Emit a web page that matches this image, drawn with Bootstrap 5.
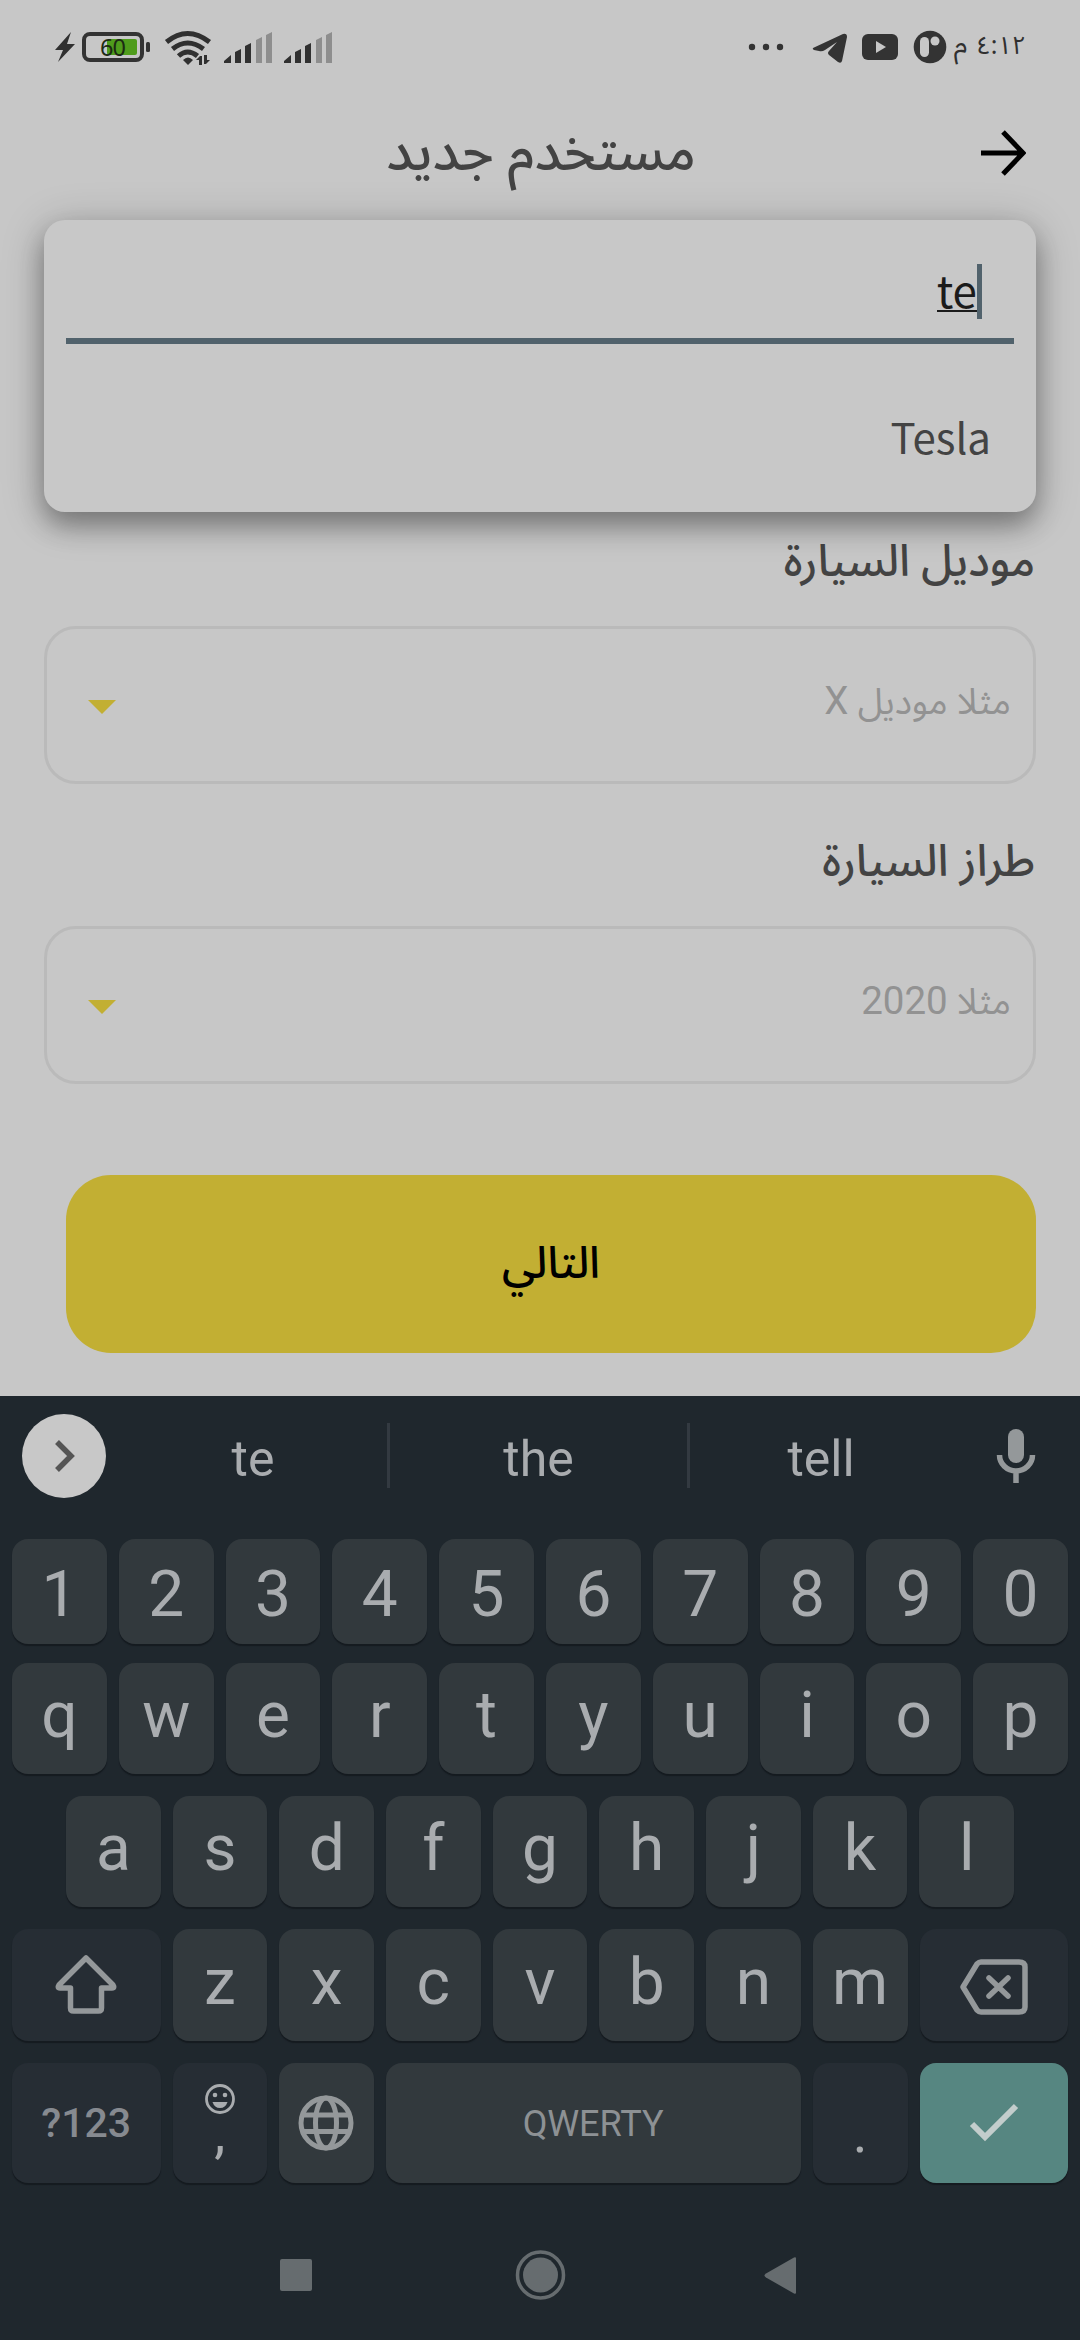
<!DOCTYPE html>
<html lang="ar">
<head>
<meta charset="utf-8">
<meta name="viewport" content="width=device-width, initial-scale=1">
<title>مستخدم جديد</title>
<link href="https://cdn.jsdelivr.net/npm/bootstrap@5.3.0/dist/css/bootstrap.min.css" rel="stylesheet">
<style>
  body{width:1080px;height:2340px;overflow:hidden;background:#c7c7c7;color:#434343;font-family:Roboto,"Noto Sans Arabic","Noto Sans","DejaVu Sans",sans-serif}
  svg{display:block;flex:none}
  .arabic{font-family:"Noto Sans Arabic","Noto Sans","DejaVu Sans",sans-serif;white-space:nowrap;line-height:1}
  .screen{height:1396px}
  .statusbar{height:94px;padding:0 54px 0 55px}
  .clock{width:79px;font-size:28px;color:#303030;padding-bottom:3px}
  .clock .digits{font-size:25px;margin-left:9px;display:inline-block}
  .titlebar{height:126px;padding:0 54px 9px 102px}
  .titlebar .arabic{font-size:53.5px;font-weight:500}
  .picker{height:292px;margin:0 44px;padding:0 22px;border-radius:21px;background:#c8c8c8;box-shadow:0 14px 26px rgba(0,0,0,.3),0 6px 44px rgba(0,0,0,.22);position:relative;z-index:2}
  .searchline{height:124px;border-bottom:6px solid #51626c;padding:44px 32px 0 0}
  .typed{font:44px/50px "Noto Sans CJK SC",sans-serif;color:#1b1b1b;border-bottom:2px solid #1b1b1b;height:48px}
  .caretbar{width:5px;height:55px;background:#51626c}
  .option{font:42px/60px "Noto Sans CJK SC",sans-serif;padding:62px 23px 0 0}
  .fieldlabel{font-size:44px;font-weight:500;height:114px;padding:28px 45px 0 0}
  .fieldlabel.second{height:142px;padding-top:56px}
  .fieldbox{height:158px;margin:0 44px;border:3px solid #bababa;border-radius:32px;padding:0 22px 0 41px}
  .fieldbox svg{margin-top:4px}
  .hint{font-size:36px;color:#929292;padding-bottom:7px}
  .hint span{font-family:Roboto,sans-serif;font-size:38.5px}
  .nextbtn{height:178px;margin:91px 44px 0 66px;border-radius:45px;background:#c2af33;color:#000;font-size:44px;font-weight:500}
  .keyboard{height:944px;background:#1f272d;color:#a9acaf}
  .suggest{height:143px;padding:0 44px 24px 22px;font-size:50px}
  .more{width:84px;height:84px;border-radius:50%;background:#c8c8c8}
  .word{width:281px;text-align:center;padding-top:7px}
  .word.first{padding-left:13px}
  .word.mid{width:297px}
  .word.last{width:262px}
  .sep{width:3px;height:65px;background:#333a41}
  .keys{padding:0 12px}
  .keyrow{gap:12px;font-size:64px;line-height:1}
  .r1{height:105px;margin-bottom:19px}
  .r2{height:111px;margin-bottom:22px}
  .r3{height:111px;margin-bottom:22px;padding:0 54px}
  .r4{height:112px;margin-bottom:22px}
  .r5{height:120px}
  .key{flex:1 1 0;min-width:0;border-radius:16px;background:#32393d;box-shadow:0 2px 1px #151b20;display:flex;align-items:center;justify-content:center;padding-bottom:5px}
  .r1 .key{padding:7px 0 0}
  .key.fn{background:#262d34}
  .key.wide{flex:0 0 148.5px;padding:0}
  .r5 .key{flex:0 0 94.5px;padding:0}
  .r5 .key.wide{flex:0 0 148.5px}
  .r5 .key.space{flex:1 1 0;font-size:36px;color:#8d9194;padding-top:2px}
  .key.num{font-size:41px;font-weight:500;color:#868a90}
  .key.enter{background:#568681}
  .smiley{margin-top:20px}
  .comma{font-size:56px;margin-top:-10px}
  .dotkey{font-size:56px;padding-top:19px}
  .navbuttons{height:157px;padding:26px 0 0 280px}
</style>
</head>
<body>
<main class="screen">
  <div class="statusbar d-flex align-items-center">
    <svg width="290" height="40" viewBox="55 27 290 40">
      <path d="M71 32 55 50h8l-5 12L75 44h-8z" fill="#303030"/>
      <rect x="84" y="34" width="58" height="26" rx="6" fill="none" stroke="#333" stroke-width="4"/>
      <rect x="146" y="42" width="4" height="10" rx="1.500" fill="#333"/>
      <rect x="107" y="39" width="30" height="16" rx="2" fill="#4f9c1c"/>
      <text x="100" y="55.500" font-family="Noto Sans" font-size="23.500" textLength="26" fill="#1c2a14">60</text>
      <g fill="none" stroke="#303030" stroke-width="5">
        <path d="M166.500 42q21-17 43 0M172.500 49q15-12 31 0M178.500 56q9-8 19 0"/>
      </g>
      <path d="M183 60q5-5 10 0l-5 5z" fill="#303030"/>
      <path d="M196 60l4-4h2v9h-3v-5zM204 55h3v5h3l-4 4h-2z" fill="#303030"/>
      <g id="bars">
        <path d="M224 63v-2l7-6v8zM235 63V52l6-3v14zM245 63V46l6-3v20z" fill="#303030"/>
        <path d="M256 63V40l6-3v26zM266 63V35l6-3v31z" fill="#8e8e8e"/>
      </g>
      <use href="#bars" x="60"/>
    </svg>
    <svg class="ms-auto" width="200" height="40" viewBox="746 27 200 40" fill="#333">
      <circle cx="751" cy="47" r="3.200"/><circle cx="765" cy="47" r="3.200"/><circle cx="779" cy="47" r="3.200"/>
      <path d="M812 48 842 34q4-1 4 3l-5 24q-1 3-4 1l-9-7q-2-2 0-4l8-9-12 8q-3 2-6 1l-5-1q-2-1-1-2z"/>
      <rect x="861" y="34" width="36" height="26" rx="6"/><path d="M875 41v12l10-6z" fill="#c7c7c7"/>
      <circle cx="929" cy="47" r="16.300"/><rect x="919" y="37" width="9" height="20" rx="4.500" fill="#c7c7c7"/><circle cx="934" cy="41" r="4.500" fill="#c7c7c7"/>
    </svg>
    <div class="clock arabic" dir="rtl"><span class="digits">٤:١٢</span>م</div>
  </div>

  <header class="titlebar d-flex align-items-center justify-content-end">
    <div class="flex-grow-1 text-center arabic" dir="rtl">مستخدم جديد</div>
    <svg width="46" height="46" viewBox="0 0 46 46" fill="none" stroke="#000" stroke-width="5"><path d="M1 23h42M23 2l20 21-20 21"/></svg>
  </header>

  <section class="picker">
    <div class="searchline d-flex justify-content-end">
      <div class="typed">te</div><div class="caretbar"></div>
    </div>
    <div class="option text-end">Tesla</div>
  </section>

  <div class="fieldlabel arabic" dir="rtl">موديل السيارة</div>
  <div class="fieldbox d-flex align-items-center justify-content-between">
    <svg width="28" height="14" viewBox="0 0 28 14"><path d="M0 0h28L14 14z" fill="#c2af33"/></svg>
    <div class="hint arabic" dir="rtl">مثلا موديل <span>X</span></div>
  </div>
  <div class="fieldlabel second arabic" dir="rtl">طراز السيارة</div>
  <div class="fieldbox d-flex align-items-center justify-content-between">
    <svg width="28" height="14" viewBox="0 0 28 14"><path d="M0 0h28L14 14z" fill="#c2af33"/></svg>
    <div class="hint arabic" dir="rtl">مثلا <span>2020</span></div>
  </div>
  <div class="nextbtn arabic d-flex align-items-center justify-content-center" dir="rtl">التالي</div>
</main>

<section class="keyboard">
  <div class="suggest d-flex align-items-center">
    <div class="more d-flex align-items-center justify-content-center">
      <svg width="84" height="84" viewBox="0 0 84 84"><path d="M35 28l14 14-14 14" fill="none" stroke="#555" stroke-width="5.500"/></svg>
    </div>
    <div class="word first">te</div><div class="sep"></div>
    <div class="word mid">the</div><div class="sep"></div>
    <div class="word last">tell</div>
    <svg class="ms-auto" width="40" height="54" viewBox="0 0 40 54"><rect x="12" y="0" width="16" height="34" rx="8" fill="#94989a"/><path d="M3.500 26a16.500 16 0 0 0 33 0M20 42v12" fill="none" stroke="#94989a" stroke-width="5.500"/></svg>
  </div>
  <div class="keys">
    <div class="keyrow r1 d-flex"><div class="key">1</div><div class="key">2</div><div class="key">3</div><div class="key">4</div><div class="key">5</div><div class="key">6</div><div class="key">7</div><div class="key">8</div><div class="key">9</div><div class="key">0</div></div>
    <div class="keyrow r2 d-flex"><div class="key">q</div><div class="key">w</div><div class="key">e</div><div class="key">r</div><div class="key">t</div><div class="key">y</div><div class="key">u</div><div class="key">i</div><div class="key">o</div><div class="key">p</div></div>
    <div class="keyrow r3 d-flex"><div class="key">a</div><div class="key">s</div><div class="key">d</div><div class="key">f</div><div class="key">g</div><div class="key">h</div><div class="key">j</div><div class="key">k</div><div class="key">l</div></div>
    <div class="keyrow r4 d-flex">
      <div class="key fn wide"><svg width="64" height="64" viewBox="0 0 64 64" fill="none" stroke="#94989a" stroke-width="5.500" stroke-linejoin="round"><path d="M32 5 5 32q-2 3 1 3h10.500v20q0 3 3 3h25q3 0 3-3V35H58q3 0 1-3z"/></svg></div>
      <div class="key">z</div><div class="key">x</div><div class="key">c</div><div class="key">v</div><div class="key">b</div><div class="key">n</div><div class="key">m</div>
      <div class="key fn wide"><svg class="mt-1" width="70" height="56" viewBox="0 0 70 56" fill="none" stroke="#94989a" stroke-width="5.500" stroke-linejoin="round" stroke-linecap="round"><path d="M22 3h38q6 0 6 5v40q0 5-6 5H22q-2 0-4-2L4 28 18 5q2-2 4-2zM30 19l19 18M49 19 30 37"/></svg></div>
    </div>
    <div class="keyrow r5 d-flex">
      <div class="key fn wide num">?123</div>
      <div class="key fn flex-column justify-content-start"><svg class="smiley" width="32" height="32" viewBox="0 0 32 32"><circle cx="16" cy="16" r="13.500" fill="none" stroke="#a9acaf" stroke-width="2.800"/><circle cx="11" cy="12" r="2.300" fill="#a9acaf"/><circle cx="21" cy="12" r="2.300" fill="#a9acaf"/><path d="M8.500 19h15q-2 6-7.500 6t-7.500-6z" fill="#a9acaf"/></svg><div class="comma">,</div></div>
      <div class="key"><svg width="56" height="56" viewBox="0 0 56 56" fill="none" stroke="#94989a" stroke-width="5"><circle cx="28" cy="28" r="25"/><ellipse cx="28" cy="28" rx="10.500" ry="25"/><path d="M4 20h48M4 36.500h48"/></svg></div>
      <div class="key space">QWERTY</div>
      <div class="key fn"><span class="dotkey">.</span></div>
      <div class="key enter wide"><svg width="50" height="40" viewBox="0 0 50 40" fill="none" stroke="#c3cdcc" stroke-width="6"><path d="M3 21l13 13L47 3"/></svg></div>
    </div>
  </div>
  <div class="navbuttons d-flex align-items-center">
    <svg width="520" height="50" viewBox="280 2250 520 50" fill="#666c6f"><rect x="280" y="2259" width="32" height="32" rx="2"/><circle cx="540.500" cy="2275" r="17.500"/><circle cx="540.500" cy="2275" r="23" fill="none" stroke="#666c6f" stroke-width="3.500"/><path d="M766 2273.500l28-16q2-1 2 1v34q0 2-2 1l-28-16q-3-2 0-4z"/></svg>
  </div>
</section>
<script src="https://cdn.jsdelivr.net/npm/bootstrap@5.3.0/dist/js/bootstrap.bundle.min.js"></script>
</body>
</html>
